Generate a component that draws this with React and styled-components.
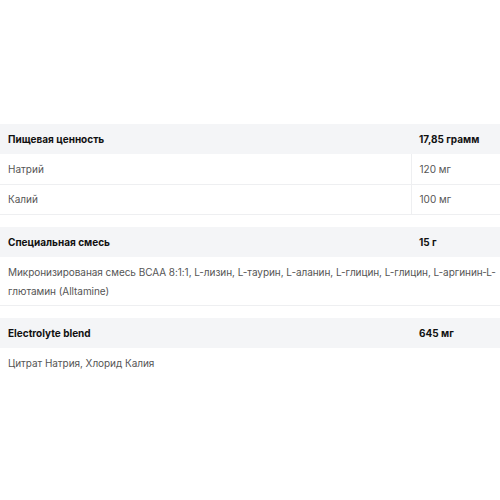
import React from 'react';
import styled, { createGlobalStyle } from 'styled-components';

const GlobalStyle = createGlobalStyle`
  body {
    margin: 0;
    background: #fff;
    font-family: Inter, "Noto Sans", sans-serif;
  }
`;

const Page = styled.div`
  padding-top: 124px;
  display: flex;
  flex-direction: column;
  gap: 12px;
`;

const Table = styled.table`
  width: 100%;
  border-collapse: collapse;
  font-size: 10px;
  table-layout: fixed;
`;

const HeadCell = styled.th`
  background: #f4f5f7;
  color: #111;
  font-weight: 700;
  text-align: left;
  height: 30px;
  padding: 0 8px;
  box-sizing: border-box;
  width: ${p => (p.$value ? '89px' : 'auto')};
`;

const Row = styled.tr`
  border-bottom: ${p => (p.$last ? 'none' : '1px solid #eeeff1')};
`;

const Cell = styled.td`
  color: #555;
  height: 30px;
  padding: 0 8px;
  box-sizing: border-box;
  border-left: ${p => (p.$value ? '1px solid #eeeff1' : 'none')};
`;

const NoteCell = styled.td`
  color: #555;
  padding: 6px 0 4px 8px;
  line-height: 19px;
  letter-spacing: -0.05px;
`;

const sections = [
  {
    title: 'Пищевая ценность',
    amount: '17,85 грамм',
    rows: [
      ['Натрий', '120 мг'],
      ['Калий', '100 мг'],
    ],
  },
  {
    title: 'Специальная смесь',
    amount: '15 г',
    note: 'Микронизированая смесь BCAA 8:1:1, L-лизин, L-таурин, L-аланин, L-глицин, L-глицин, L-аргинин\u2011L-глютамин (Alltamine)',
  },
  {
    title: 'Electrolyte blend',
    amount: '645 мг',
    note: 'Цитрат Натрия, Хлорид Калия',
    last: true,
  },
];

const App = () => (
  <>
    <GlobalStyle />
    <Page>
      {sections.map(s => (
        <Table key={s.title}>
          <thead>
            <tr>
              <HeadCell>{s.title}</HeadCell>
              <HeadCell $value>{s.amount}</HeadCell>
            </tr>
          </thead>
          <tbody>
            {s.rows &&
              s.rows.map(([name, val]) => (
                <Row key={name}>
                  <Cell>{name}</Cell>
                  <Cell $value>{val}</Cell>
                </Row>
              ))}
            {s.note && (
              <Row $last={s.last}>
                <NoteCell colSpan={2}>{s.note}</NoteCell>
              </Row>
            )}
          </tbody>
        </Table>
      ))}
    </Page>
  </>
);

export default App;
